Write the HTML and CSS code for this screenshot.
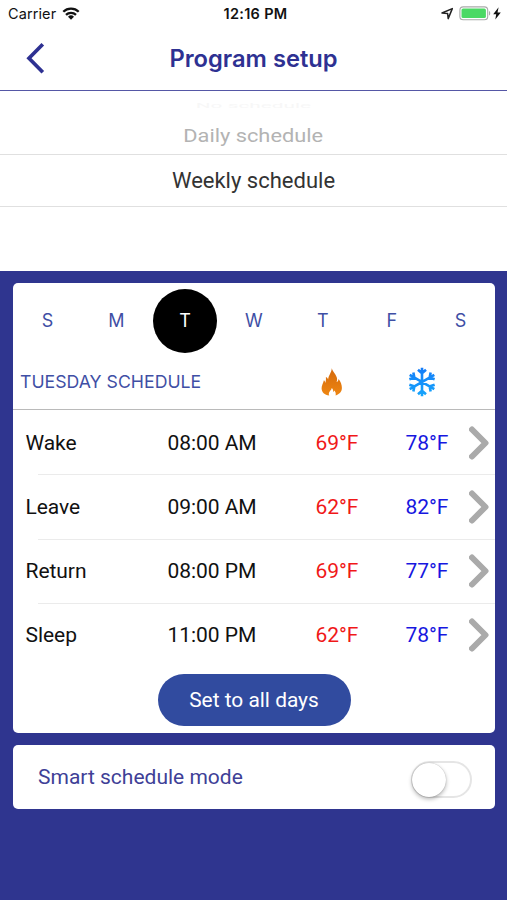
FILE: index.html
```html
<!DOCTYPE html>
<html lang="en">
<head>
<meta charset="utf-8">
<title>Program setup</title>
<link rel="stylesheet" href="styles.css">
</head>
<body>
<div class="status">
  <div class="status-left"><span class="carrier">Carrier</span>
    <svg class="wifi" width="18" height="13" viewBox="0 0 18 13"><g fill="none" stroke="#111" stroke-width="2.3"><path d="M1.300 4.800a11 11 0 0 1 15.400 0"/><path d="M4 7.800a7.200 7.200 0 0 1 10 0"/></g><path d="M6 9.700a4.300 4.300 0 0 1 6 0L9 12.700z" fill="#111"/></svg>
  </div>
  <span class="clock">12:16 PM</span>
  <div class="status-right">
    <svg width="13" height="13" viewBox="0 0 13 13"><path d="M1 6 11.300 1.600 7.200 11.600 6.600 6.400z" fill="none" stroke="#222" stroke-width="1.500" stroke-linejoin="round"/></svg>
    <svg class="battery" width="33" height="15" viewBox="0 0 33 15"><rect x=".9" y=".9" width="27.800" height="12.800" rx="3.300" fill="#fff" stroke="#a9aaa9" stroke-width="1.100"/><rect x="2.500" y="2.500" width="24.400" height="9.600" rx="1.600" fill="#4bd964"/><path d="M30 5v4.600c1.700-.7 1.700-3.900 0-4.600z" fill="#a9aaa9"/></svg>
    <svg class="bolt" width="8" height="13" viewBox="0 0 8 13"><path d="M5.600.3.200 7.200h3L2.300 12.500 7.800 5.400H4.500z" fill="#111"/></svg>
  </div>
</div>
<header class="nav">
  <svg class="back" width="20" height="34" viewBox="0 0 20 34"><path d="M16.800 2.200 3 16.200l13.800 14" fill="none" stroke="#2e3192" stroke-width="3.700"/></svg>
  <h1>Program setup</h1>
</header>
<section class="picker">
  <div class="option far"><span>No schedule</span></div>
  <div class="option near"><span>Daily schedule</span></div>
  <div class="option selected"><span>Weekly schedule</span></div>
</section>
<main>
  <section class="card schedule">
    <div class="days"><span>S</span><span>M</span><span class="active">T</span><span>W</span><span>T</span><span>F</span><span>S</span></div>
    <div class="heading">
      <h2>TUESDAY SCHEDULE</h2>
      <svg class="flame" width="22" height="28" viewBox="0 0 22 28"><defs><linearGradient id="fire" x1="0" y1="0" x2="0" y2="1"><stop offset="0" stop-color="#d4690c"/><stop offset="1" stop-color="#ee8612"/></linearGradient></defs><path d="M10.800.2c.7 3.600 4.900 6.500 5.300 10.500.1 1.300-.2 2.400-.5 3.400 1-.4 1.900-1.500 2-3.100 2 2.500 3.400 6 3.300 9.100-.1 3.900-2.500 6.400-6.300 7.300.5-2.100-.2-3.800-1.300-4.900-.2.800-.5 1.200-1 1.400 0-1.600-.5-2.900-1.500-3.800-.2 2.100-3 3.500-3 5.600 0 .600.200 1.200.5 1.700C3.400 26.700.700 24.200.600 20.400c-.1-2.900 1.500-4.800 2.300-8.200.9.700 1.300 1.600 1.400 2.700C5 12.800 5 11 4.900 9c1.300.5 1.900 1.400 2.200 2.500C7.300 7.600 10.400 4.900 10.800.2z" fill="url(#fire)"/></svg>
      <svg class="snow" width="28" height="30" viewBox="-14 -15 28 30"><defs><linearGradient id="ice" gradientUnits="userSpaceOnUse" x1="0" y1="-14" x2="0" y2="14"><stop offset="0" stop-color="#147cf8"/><stop offset="1" stop-color="#16a6fc"/></linearGradient></defs><path d="M0-14.200V14.200M-12.300-7.100 12.300 7.100M-12.300 7.100 12.300-7.100M-4-12.300 0-8.800l4-3.500M-4 12.300 0 8.800l4 3.500M8.650-9.610 7.620-4.400 12.650-2.690M-8.650 9.610-7.620 4.400-12.650 2.690M8.650 9.610 7.620 4.400 12.650 2.690M-8.650-9.610-7.620-4.400-12.650-2.690" fill="none" stroke="url(#ice)" stroke-width="2.600"/></svg>
    </div>
    <div class="row"><span>Wake</span><span>08:00 AM</span><span class="heat">69°F</span><span class="cool">78°F</span><svg class="chevron" viewBox="0 0 20 34"><path d="M3 3.500 16.500 17 3 30.500"/></svg></div>
    <div class="row"><span>Leave</span><span>09:00 AM</span><span class="heat">62°F</span><span class="cool">82°F</span><svg class="chevron" viewBox="0 0 20 34"><path d="M3 3.500 16.500 17 3 30.500"/></svg></div>
    <div class="row"><span>Return</span><span>08:00 PM</span><span class="heat">69°F</span><span class="cool">77°F</span><svg class="chevron" viewBox="0 0 20 34"><path d="M3 3.500 16.500 17 3 30.500"/></svg></div>
    <div class="row"><span>Sleep</span><span>11:00 PM</span><span class="heat">62°F</span><span class="cool">78°F</span><svg class="chevron" viewBox="0 0 20 34"><path d="M3 3.500 16.500 17 3 30.500"/></svg></div>
    <button class="apply">Set to all days</button>
  </section>
  <section class="card smart"><span>Smart schedule mode</span><div class="switch"><i></i></div></section>
</main>
</body>
</html>
```
FILE: styles.css
```css
* { box-sizing: border-box; }
body { margin: 0; height: 900px; overflow: hidden; background: #fff; font-family: Roboto, sans-serif; display: flex; flex-direction: column; }
svg { display: block; flex: none; }

.status { height: 27px; flex: none; display: grid; grid-template-columns: 1fr auto 1fr; align-items: center; padding: 0 6px 0 8px; font-family: Inter, sans-serif; color: #111; }
.status-left { display: flex; align-items: center; gap: 6px; }
.carrier { font-size: 14.500px; letter-spacing: .1px; }
.clock { font-size: 14.500px; font-weight: 600; letter-spacing: .3px; padding-left: 2px; }
.status-right { display: flex; align-items: center; justify-content: flex-end; }
.battery { margin-left: 5px; }
.bolt { margin-left: 1px; }

.nav { height: 64px; flex: none; display: grid; grid-template-columns: 60px 1fr 60px; align-items: center; border-bottom: 1.500px solid #5557a6; }
.back { margin-left: 26px; }
h1 { margin: 0; text-align: center; font: 600 23.700px/30px Inter, sans-serif; color: #2e3192; }

.picker { height: 179.500px; flex: none; overflow: hidden; text-align: center; }
.option span { display: inline-block; }
.far { height: 24px; padding-top: 8px; font-size: 20px; line-height: 12px; color: #f7f7f7; }
.far span { transform: scale(1.040, .4); }
.near { height: 39px; line-height: 41px; font-size: 20px; color: #b3b3b3; }
.near span { transform: scale(1.090, .95); }
.selected { height: 53px; line-height: 51px; font-size: 22px; color: #333; border-top: 1.500px solid #e0e0e0; border-bottom: 1.500px solid #e0e0e0; }

main { flex: 1; background: #2f358f; padding: 12px 12px 0 13px; }
.card { background: #fff; border-radius: 5px; }
.schedule { height: 450px; display: flex; flex-direction: column; }
.days { height: 76px; display: grid; grid-template-columns: repeat(7, 1fr); align-items: center; justify-items: center; font: 18px/24px Inter, sans-serif; color: #3f4fa5; }
.days span:not(.active) { padding-top: 1px; }
.active { width: 64px; height: 64px; border-radius: 50%; background: #000; color: #fff; display: grid; place-items: center; padding-top: 1px; }
.heading { height: 51.500px; display: grid; grid-template-columns: 308px 80px 1fr; align-items: center; padding: 0 0 4px 7px; border-bottom: 1.500px solid #bababa; }
h2 { margin: 0; font: 400 17.700px Inter, sans-serif; color: #3f4fa5; }
.flame { margin-left: -7px; }
.row { height: 64.250px; display: grid; grid-template-columns: 142px 148px 90px 63px 20px; align-items: center; padding: 1px 0 0 12.500px; font-size: 21px; letter-spacing: -.05px; color: #111; }
.row + .row { background: linear-gradient(#ebebeb, #ebebeb) 25px 0 / 100% 1px no-repeat; }
.heat { color: #f01818; }
.cool { color: #1717e0; }
.chevron { width: 20px; height: 34px; fill: none; stroke: #aaa; stroke-width: 6; stroke-linecap: round; stroke-linejoin: round; }
.apply { align-self: center; width: 193px; height: 52px; margin: 6.500px 0 0; padding: 0; border: 0; border-radius: 26px; background: #314b9f; color: #fff; font: 20.900px Roboto, sans-serif; }
.smart { margin-top: 12px; height: 64px; padding: 0 23px 0 25px; display: flex; align-items: center; justify-content: space-between; font-size: 21px; color: #403f97; }
.switch { width: 61px; height: 37px; margin-top: 6px; border: 2px solid #e5e5e5; border-radius: 19px; }
.switch i { display: block; width: 34px; height: 34px; margin: -.5px 0 0 -1px; border-radius: 50%; background: #fff; box-shadow: 0 2px 4px rgba(0,0,0,.3), 0 0 1px rgba(0,0,0,.3); }
```
